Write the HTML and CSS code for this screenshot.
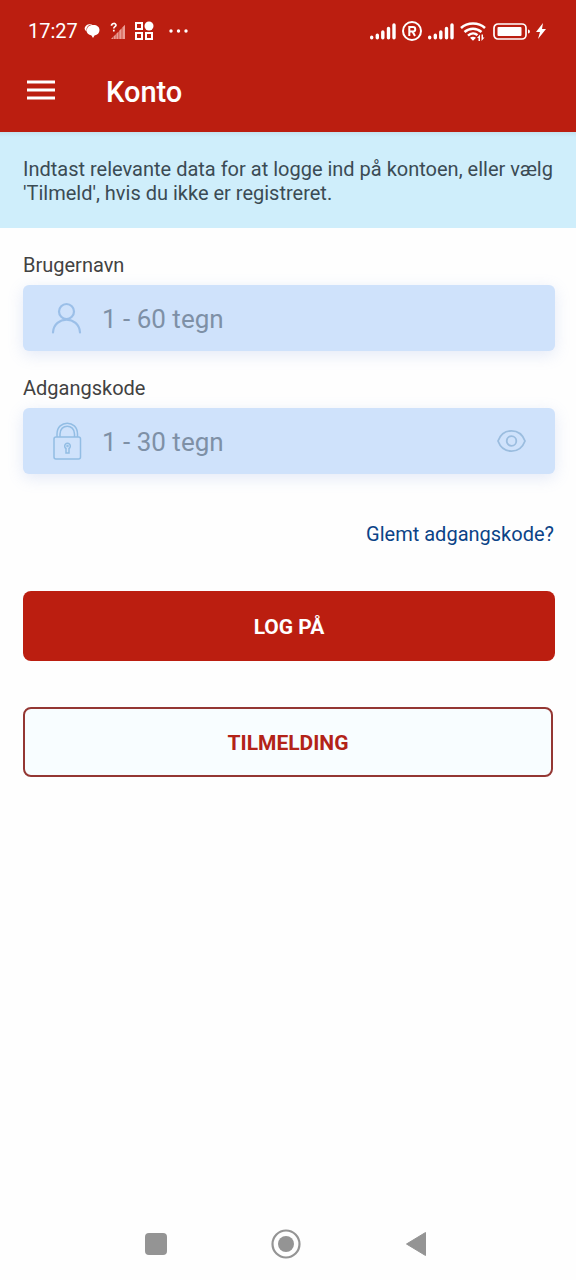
FILE: index.html
```html
<!DOCTYPE html>
<html lang="da">
<head>
<meta charset="utf-8">
<meta name="viewport" content="width=device-width, initial-scale=1">
<title>Konto</title>
<link rel="stylesheet" href="styles.css">
</head>
<body>
<div class="screen">
  <header class="top">
    <div class="status">
      <div class="status-group">
        <span class="clock">17:27</span>
        <svg width="16" height="16" viewBox="0 0 16 16" aria-hidden="true"><path fill="#fff" d="M3.500 4.500C5 2.500 7 2 9.500 2c3.500 0 6 2 6 5 0 3-2 5-5 5.500L9 15l-1.500-2.500C4.500 12 2.500 10 2.500 7.500z"/><path fill="#fff" d="M2.500 8.500C.5 7 0 5 1.500 3.200 3 1.300 6 .7 8.500 1.200 5 1.500 2.800 3.500 2.500 6z"/></svg>
        <svg class="icon-nosim" width="16" height="18" viewBox="0 0 16 18" aria-hidden="true"><g fill="#ea9d94"><path d="M1 17l2-2v2zM3.500 17v-2.500l2.300-2.300V17zM6.300 17v-5.300l2.300-2.300V17zM9.200 17V8.800l2.500-2.500V17zM12.300 17V5.500L15 2.800V17z"/></g><path fill="none" stroke="#fff" stroke-width="1.700" d="M1.500 3.800C1.500.8 6 .8 6 3.200c0 1.500-2.200 1.500-2.200 3.300M3.800 7.800v1.700"/></svg>
        <svg width="20" height="20" viewBox="0 0 20 20" aria-hidden="true"><g fill="none" stroke="#fff" stroke-width="2"><path d="M2 2h6v6H2zM2 12h6v6H2zM12 12h6v6h-6z"/></g><circle cx="15" cy="5" r="4.500" fill="#fff"/></svg>
        <svg class="icon-more" width="20" height="4" viewBox="0 0 20 4" aria-hidden="true"><g fill="#fff"><circle cx="3" cy="2" r="1.700"/><circle cx="10.500" cy="2" r="1.700"/><circle cx="18" cy="2" r="1.700"/></g></svg>
      </div>
      <div class="status-group status-right">
        <svg width="26" height="18" viewBox="0 0 26 18" aria-hidden="true"><path stroke="#fff" stroke-width="3.400" stroke-linecap="round" d="M1.700 15.700v-.4M7.300 15.700v-2.500M12.800 15.700V10M18.500 15.700V6.500M24 15.700V3"/></svg>
        <svg width="20" height="20" viewBox="0 0 20 20" aria-hidden="true"><circle cx="10" cy="10" r="9" fill="none" stroke="#fff" stroke-width="2"/><path fill="none" stroke="#fff" stroke-width="2" d="M7.300 15V6H11c3 0 3 4.500 0 4.500H7.500M10.500 10.500l2.500 4.500"/></svg>
        <svg width="26" height="18" viewBox="0 0 26 18" aria-hidden="true"><path stroke="#fff" stroke-width="3.400" stroke-linecap="round" d="M1.700 15.700v-.4M7.300 15.700v-2.500M12.800 15.700V10M18.500 15.700V6.500M24 15.700V3"/></svg>
        <svg width="26" height="20" viewBox="0 0 26 20" aria-hidden="true"><g fill="none" stroke="#fff" stroke-width="2.500"><path d="M1 7c6.500-6 17.500-6 24 0M4.500 11c5-4.500 12-4.500 17 0M8 14.700c3-2.800 7-2.800 9.500-.5"/></g><path fill="#fff" d="M10 16.800q3-2 6 0l-3 3zM17 17l3-3.500V20h-1.500v-3zM21.500 13.500H23v3h1.500l-3 3.500z"/></svg>
        <svg width="38" height="18" viewBox="0 0 38 18" aria-hidden="true"><rect x="2" y="2" width="32" height="15" rx="4" fill="none" stroke="#fff" stroke-width="1.700"/><rect x="5.500" y="5" width="24" height="9" rx="1" fill="#fff"/><path fill="#fff" d="M36 7.500c2.500 0 2.500 4 0 4z"/></svg>
        <svg width="10" height="16" viewBox="0 0 10 16" aria-hidden="true"><path fill="#fff" d="M7 0 0 9h4L2 16l8-10H6z"/></svg>
      </div>
    </div>
    <div class="appbar">
      <button class="menu" type="button" aria-label="Menu"><svg width="28" height="20" viewBox="0 0 28 20" aria-hidden="true"><path stroke="#fff" stroke-width="2.800" d="M0 2h28M0 10h28M0 18h28"/></svg></button>
      <h1 class="title">Konto</h1>
    </div>
  </header>
  <p class="notice">Indtast relevante data for at logge ind på kontoen, eller vælg 'Tilmeld', hvis du ikke er registreret.</p>
  <main class="content">
    <form class="form">
      <div class="field">
        <label class="label" for="username">Brugernavn</label>
        <div class="box">
          <svg width="32" height="32" viewBox="0 0 32 32" aria-hidden="true"><g fill="none" stroke="#9bbfe8" stroke-width="2.200" stroke-linecap="round"><circle cx="15.500" cy="9.500" r="7.500"/><path d="M2 30.500c1-17 26-17 27 0"/></g></svg>
          <input class="input" id="username" type="text" placeholder="1 - 60 tegn">
        </div>
      </div>
      <div class="field">
        <label class="label" for="password">Adgangskode</label>
        <div class="box">
          <svg width="32" height="38" viewBox="0 0 32 38" aria-hidden="true"><g fill="none" stroke="#92bde4" stroke-width="1.500"><rect x="3" y="15" width="26.500" height="22" rx="2"/><path d="M6 15v-3C6-2.500 26.500-2.500 26.500 12v3M9 15v-3C9 1.500 23.500 1.500 23.500 12v3"/><path d="M15 31v-4.500a2.800 2.800 0 1 1 3 0V31z"/><circle cx="16.500" cy="24" r=".5"/></g></svg>
          <input class="input" id="password" type="password" placeholder="1 - 30 tegn">
          <button class="reveal" type="button" aria-label="Vis adgangskode"><svg width="30" height="24" viewBox="0 0 30 24" aria-hidden="true"><g fill="none" stroke="#9bbddf" stroke-width="1.800"><path d="M1 12C6-1.500 23-1.500 28 12 23 25.500 6 25.500 1 12Z"/><circle cx="14.500" cy="12" r="4.800"/></g></svg></button>
        </div>
      </div>
      <a class="forgot" href="#">Glemt adgangskode?</a>
      <button class="btn btn-primary" type="submit">LOG PÅ</button>
      <button class="btn btn-outline" type="button">TILMELDING</button>
    </form>
  </main>
  <nav class="sysnav">
    <button class="sys" type="button" aria-label="Seneste"><svg width="30" height="30" viewBox="0 0 30 30" aria-hidden="true"><rect x="4" y="4" width="22" height="22" rx="4" fill="#949494"/></svg></button>
    <button class="sys" type="button" aria-label="Hjem"><svg width="30" height="30" viewBox="0 0 30 30" aria-hidden="true"><circle cx="15" cy="15" r="13.500" fill="none" stroke="#949494" stroke-width="2.200"/><circle cx="15" cy="15" r="8" fill="#949494"/></svg></button>
    <button class="sys" type="button" aria-label="Tilbage"><svg width="30" height="30" viewBox="0 0 30 30" aria-hidden="true"><path d="M5.500 15 24.500 3.500v23z" fill="#949494" stroke="#949494" stroke-linejoin="round"/></svg></button>
  </nav>
</div>
</body>
</html>
```

FILE: styles.css
```css
* { box-sizing: border-box; }
body { margin: 0; background: #fefefe; color: #424242; font-family: Roboto, "Liberation Sans", sans-serif; font-size: 20px; line-height: 24px; }
button, input { font: inherit; }
button { margin: 0; padding: 0; border: 0; background: none; cursor: pointer; }
svg { display: block; flex: none; }
.screen { display: flex; flex-direction: column; min-height: 100vh; }
.top { background: #bb1e10; color: #fff; }
.status { display: flex; align-items: center; justify-content: space-between; height: 60px; padding: 2px 30px 0 28px; }
.status-group { display: flex; align-items: center; gap: 6px; }
.icon-nosim { margin: 0 2px 0 4px; }
.icon-more { margin-left: 8px; }
.appbar { display: flex; align-items: center; gap: 51px; height: 72px; padding: 0 27px 12px; }
.menu { display: flex; }
.title { margin: 4px 0 0; font-size: 29px; line-height: 32px; font-weight: 500; }
.notice { margin: 0; padding: 25px 20px 23px 23px; min-height: 96px; background: linear-gradient(#c3e1ee, #cfeefb 5px); color: #3b4b54; }
.content { flex: 1; padding: 25px 21px 24px 23px; }
.form { display: flex; flex-direction: column; }
.field { display: flex; flex-direction: column; gap: 8px; margin-bottom: 25px; }
.box { display: flex; align-items: center; height: 66px; padding: 0 28px; border-radius: 6px; background: #cfe2fb; box-shadow: 0 4px 16px rgba(120, 150, 220, .2); }
.input { flex: 1; min-width: 0; height: 100%; margin-left: 19px; padding: 2px 0 0; border: 0; outline: 0; background: none; color: #424242; font-size: 26px; }
.input::placeholder { color: #7e90a6; opacity: 1; }
.reveal { display: flex; }
.forgot { align-self: flex-end; margin: 23px 1px 0 0; color: #0b4387; text-decoration: none; }
.btn { height: 70px; padding-top: 2px; border-radius: 8px; font-size: 21px; font-weight: 700; }
.btn-primary { margin-top: 45px; background: #bb1e10; color: #fff; }
.btn-outline { margin: 46px 2px 0 0; border: 2px solid #943733; background: #f8fdff; color: #b32318; }
.sysnav { display: flex; justify-content: center; gap: 100px; padding: 0 4px 21px 0; }
.sys { display: flex; }
```
